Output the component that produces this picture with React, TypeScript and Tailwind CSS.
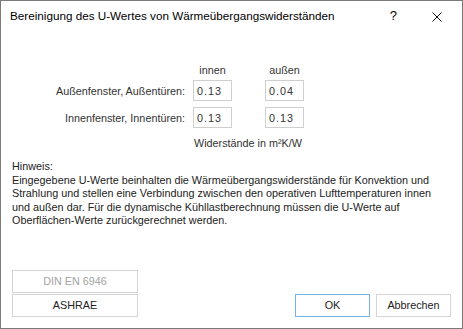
import React from 'react';

const UWertDialog: React.FC = () => {
  const rows = [
    { label: 'Außenfenster, Außentüren:', innen: '0.13', aussen: '0.04' },
    { label: 'Innenfenster, Innentüren:', innen: '0.13', aussen: '0.13' },
  ];

  return (
    <div className="w-[463px] h-[329px] bg-white border border-[#7a7a7a] flex flex-col font-['Liberation_Sans',sans-serif] text-[10.8px] text-[#1e1e1e]">
      {/* Title bar */}
      <div className="h-[30px] flex items-center pl-[9px] pr-[20px]">
        <span className="flex-1 text-[11.7px] text-black">
          Bereinigung des U-Wertes von Wärmeübergangswiderständen
        </span>
        <span className="text-[13px] text-black mr-[35px]">?</span>
        <svg width="10" height="10" viewBox="0 0 10 10" className="mt-[1px]">
          <path d="M0.5 0.5 L9.5 9.5 M9.5 0.5 L0.5 9.5" stroke="#111" strokeWidth="1" />
        </svg>
      </div>

      {/* Resistance grid */}
      <div className="mt-[31px] grid grid-cols-[182px_39px_33px_39px] gap-y-[6px] ml-[10px]">
        <div />
        <div className="text-center text-[#333] -mb-[4px]">innen</div>
        <div />
        <div className="text-center text-[#333] -mb-[4px]">außen</div>
        {rows.map((row) => (
          <React.Fragment key={row.label}>
            <div className="flex items-center justify-end pr-[8px] text-[#333]">{row.label}</div>
            <div className="h-[21px] border border-[#cfcfcf] px-[3px] flex items-center tracking-[1px] text-[#333]">
              {row.innen}
            </div>
            <div />
            <div className="h-[21px] border border-[#cfcfcf] px-[3px] flex items-center tracking-[1px] text-[#333]">
              {row.aussen}
            </div>
          </React.Fragment>
        ))}
      </div>
      <div className="ml-[193px] mt-[7px] text-[#333]">Widerstände in m²K/W</div>

      {/* Hinweis */}
      <div className="mx-[11px] mt-[9px] leading-[13.5px] text-[#222]">
        <div>Hinweis:</div>
        <div>
          Eingegebene U-Werte beinhalten die Wärmeübergangswiderstände für Konvektion und
          Strahlung und stellen eine Verbindung zwischen den operativen Lufttemperaturen innen
          und außen dar. Für die dynamische Kühllastberechnung müssen die U-Werte auf
          Oberflächen-Werte zurückgerechnet werden.
        </div>
      </div>

      {/* Buttons */}
      <div className="mt-auto mb-[11px] mx-[11px] flex items-end justify-between">
        <div className="flex flex-col gap-[1px]">
          <button className="w-[126px] h-[23px] border border-[#d4d4d4] bg-white text-[#a3a3a3]">
            DIN EN 6946
          </button>
          <button className="w-[126px] h-[23px] border border-[#d4d4d4] bg-white text-[#222]">
            ASHRAE
          </button>
        </div>
        <div className="flex gap-[6px]">
          <button className="w-[75px] h-[23px] border border-[#72b4e6] bg-white text-[#222]">OK</button>
          <button className="w-[75px] h-[23px] border border-[#d4d4d4] bg-white text-[#222]">Abbrechen</button>
        </div>
      </div>
    </div>
  );
};

export default function App() {
  return <UWertDialog />;
}
